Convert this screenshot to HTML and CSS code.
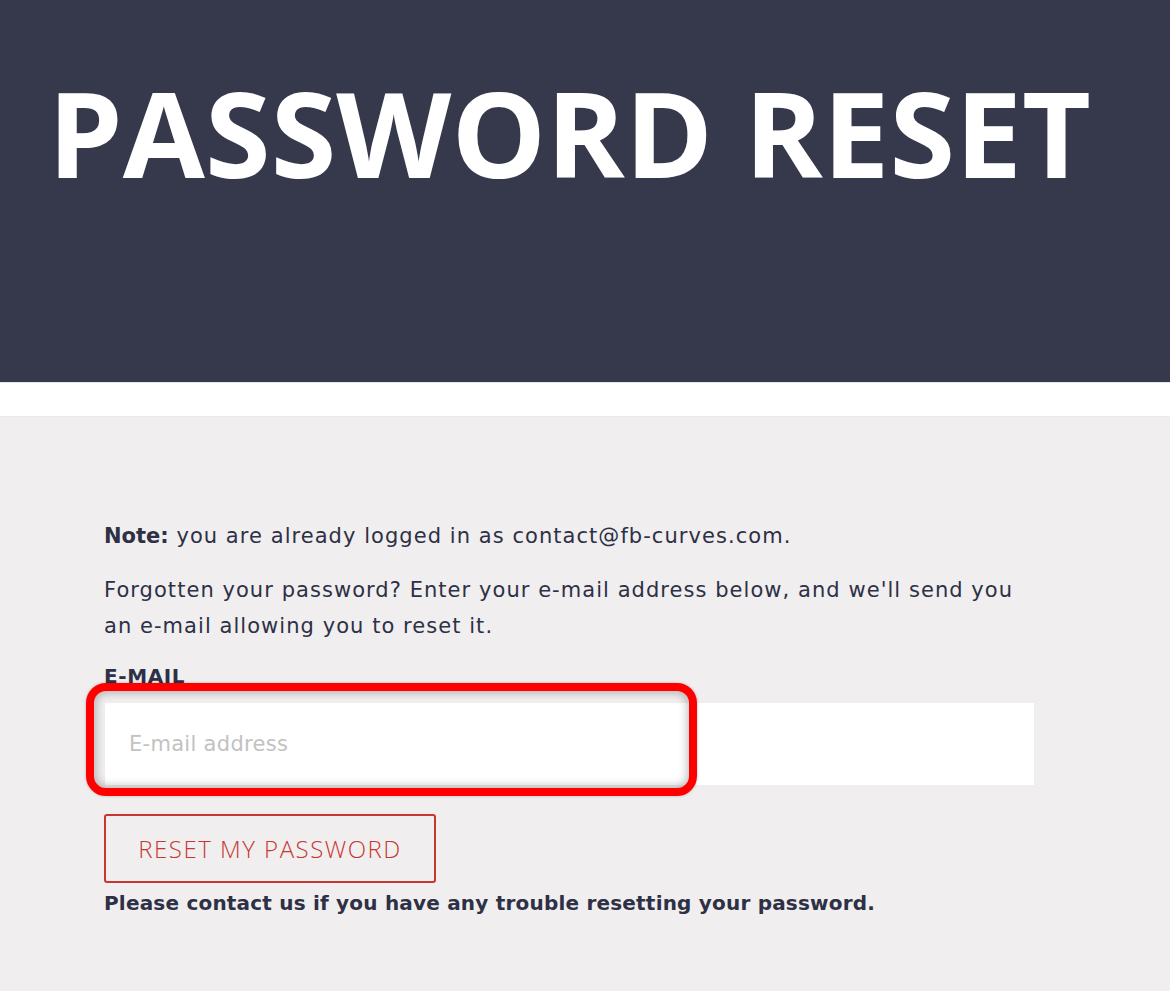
FILE: index.html
```html
<!DOCTYPE html>
<html>
<head>
<meta charset="utf-8">
<link rel="stylesheet" href="styles.css">
</head>
<body>
<header class="hero">
  <h1 class="hero-title">PASSWORD RESET</h1>
</header>
<div class="band"></div>
<main class="content">
  <p class="note"><strong>Note:</strong> you are already logged in as contact@fb-curves.com.</p>
  <p class="intro">Forgotten your password? Enter your e-mail address below, and we'll send you an e-mail allowing you to reset it.</p>
  <label class="label" for="email">E-MAIL</label>
  <div class="field">
    <input class="input" id="email" type="email" placeholder="E-mail address">
    <div class="highlight"></div>
  </div>
  <button class="btn" type="button">RESET MY PASSWORD</button>
  <p class="footer-note">Please contact us if you have any trouble resetting your password.</p>
</main>
</body>
</html>
```
FILE: styles.css
```css
html, body {
  margin: 0;
  padding: 0;
}
body {
  background: #f0eeef;
  font-family: "DejaVu Sans", "Noto Sans", sans-serif;
  color: #2e3045;
  width: 1170px;
  height: 991px;
  overflow: hidden;
}
.hero {
  background: #36384b;
  height: 382px;
  box-sizing: border-box;
  padding: 62px 0 0 48px;
}
.hero-title {
  margin: 0;
  font-family: "Open Sans", sans-serif;
  font-weight: 700;
  font-size: 119px;
  line-height: 140px;
  color: #ffffff;
  letter-spacing: 0.1px;
}
.band {
  height: 33px;
  background: #ffffff;
  border-top: 1px solid #e4e4e8;
  border-bottom: 1px solid #ebe9ea;
}
.content {
  padding: 101px 0 0 104px;
  width: 931px;
}
.note, .intro {
  margin: 0;
  font-size: 21px;
  line-height: 36px;
  letter-spacing: 1.05px;
}
.note strong {
  font-weight: 700;
  letter-spacing: 0;
}
.intro {
  margin-top: 18px;
  width: 931px;
}
.label {
  display: block;
  margin-top: 20px;
  font-size: 20px;
  font-weight: 700;
  line-height: 24px;
  letter-spacing: 0.6px;
}
.field {
  position: relative;
  margin-top: 14px;
}
.input {
  display: block;
  box-sizing: border-box;
  width: 931px;
  height: 84px;
  border: 1px solid #efedee;
  background: #ffffff;
  padding: 0 0 0 24px;
  font-family: "DejaVu Sans", sans-serif;
  font-size: 21px;
  letter-spacing: 0.3px;
  color: #2e3045;
  outline: none;
}
.input::placeholder {
  color: #c2c2c2;
}
.highlight {
  position: absolute;
  left: -18px;
  top: -19px;
  width: 611px;
  height: 113px;
  box-sizing: border-box;
  border: 8px solid #ff0000;
  border-radius: 20px;
  box-shadow: inset 0 0 8px 2px rgba(0,0,0,0.25), 0 0 3px rgba(0,0,0,0.25);
  pointer-events: none;
}
.btn {
  display: block;
  margin-top: 28px;
  width: 332px;
  height: 69px;
  background: transparent;
  border: 2px solid #c7372f;
  border-radius: 3px;
  color: #c7372f;
  font-family: "Open Sans", sans-serif;
  font-weight: 300;
  font-size: 24px;
  letter-spacing: 1.5px;
  padding: 0;
}
.footer-note {
  margin: 2px 0 0;
  font-size: 20px;
  line-height: 36px;
  font-weight: 700;
  letter-spacing: 0.2px;
}
```
